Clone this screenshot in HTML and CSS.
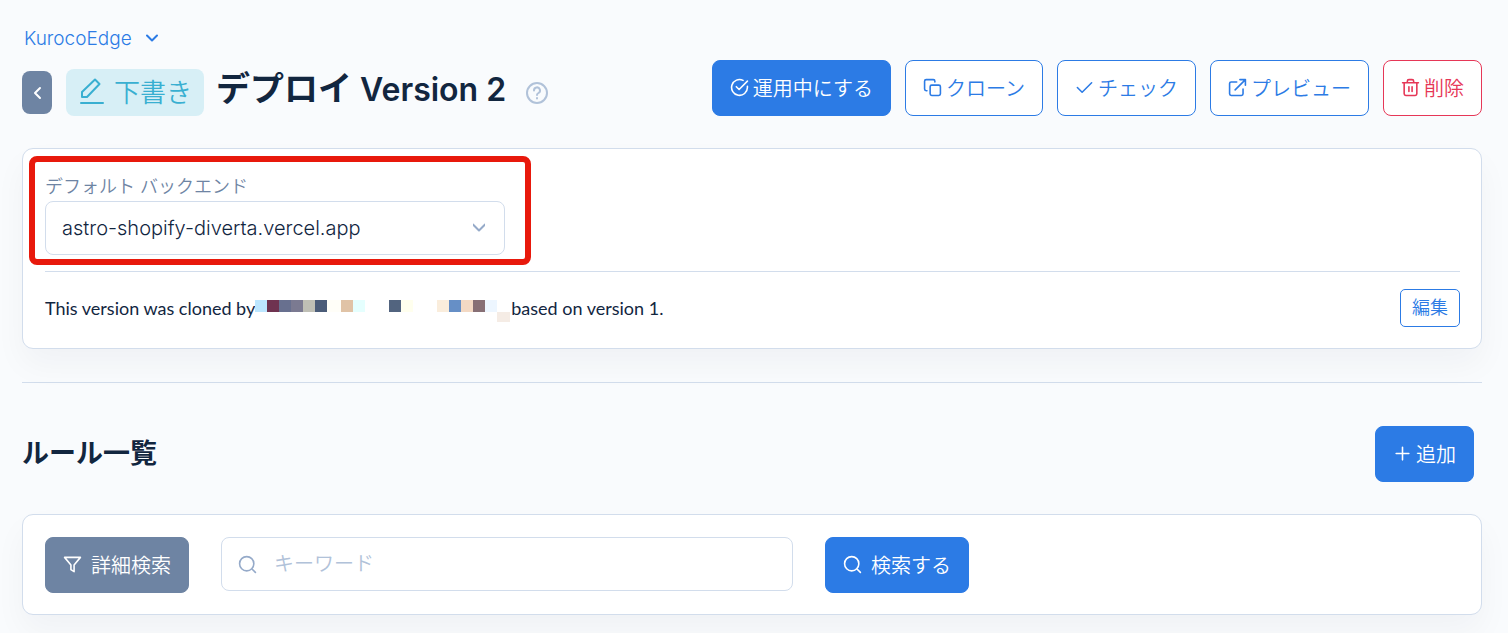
FILE: index.html
```
<!DOCTYPE html>
<html lang="ja">
<head>
  <meta charset="UTF-8">
  <meta name="viewport" content="width=device-width, initial-scale=1">
  <title>KurocoEdge</title>
  <link rel="stylesheet" href="styles.css">
</head>
<body>
  <main class="container">
    <header class="page-header">
      <div>
        <a class="breadcrumb" href="#">
          KurocoEdge
          <svg class="chevron" viewBox="0 0 12 12"><path d="M1 3.500l5 5 5-5"/></svg>
        </a>
        <div class="title-row">
          <button type="button" class="btn-back" aria-label="戻る">
            <svg viewBox="0 0 12 14"><path d="M9 2L4 7l5 5"/></svg>
          </button>
          <span class="status-badge">
            <svg viewBox="0 0 24 26"><path d="M1 25h22M2 19v-5L15 1.500l4.500 4.500L7 19z"/></svg>
            下書き
          </span>
          <h1>デプロイ <span class="version">Version 2</span></h1>
          <a class="help" href="#" aria-label="ヘルプ">
            <svg viewBox="0 0 24 24"><circle cx="12" cy="12" r="10"/><path d="M9 9.500a3 3 0 1 1 4.500 2.500c-1 .6-1.500 1-1.500 2M12 17v.5"/></svg>
          </a>
        </div>
      </div>
      <div class="button-group">
        <button type="button" class="btn btn-primary">
          <svg class="icon" viewBox="0 0 24 24"><path d="M22 10.500V12a10 10 0 1 1-5.500-9M22 4L11.500 14.500l-3.500-3.500"/></svg>
          運用中にする
        </button>
        <button type="button" class="btn btn-outline">
          <svg class="icon" viewBox="0 0 24 24"><rect x="9" y="9" width="13" height="13" rx="2"/><path d="M5 16H4a2 2 0 0 1-2-2V4a2 2 0 0 1 2-2h9a2 2 0 0 1 2 2v1"/></svg>
          クローン
        </button>
        <button type="button" class="btn btn-outline">
          <svg class="icon" viewBox="0 0 24 24"><path d="M3 12l6 6L21 6"/></svg>
          チェック
        </button>
        <button type="button" class="btn btn-outline">
          <svg class="icon" viewBox="0 0 24 24"><path d="M19 14v6a2 2 0 0 1-2 2H4a2 2 0 0 1-2-2V7a2 2 0 0 1 2-2h7M15 2h7v7M22 2L9 15"/></svg>
          プレビュー
        </button>
        <button type="button" class="btn btn-danger">
          <svg class="icon" viewBox="0 0 24 24"><path d="M2 6h20M8 6V4a2 2 0 0 1 2-2h4a2 2 0 0 1 2 2v2M4 6v14a2 2 0 0 0 2 2h12a2 2 0 0 0 2-2V6M10 11v6M14 11v6"/></svg>
          削除
        </button>
      </div>
    </header>

    <section class="card backend-card">
      <div class="highlight"></div>
      <div class="field">
        <label for="backend">デフォルト バックエンド</label>
        <div class="select-wrap">
          <select id="backend">
            <option>astro-shopify-diverta.vercel.app</option>
          </select>
          <svg class="chevron" viewBox="0 0 12 12"><path d="M0 3.500l6 6 6-6"/></svg>
        </div>
      </div>
      <div class="note">
        <p>
          <span>This version was cloned by</span>
          <svg class="mosaic" viewBox="0 0 256 22" shape-rendering="crispEdges">
            <rect x="0" width="12" height="12" fill="#bce6ff"/>
            <rect x="12" width="12" height="12" fill="#6f3350"/>
            <rect x="24" width="12" height="12" fill="#68708f"/>
            <rect x="36" width="12" height="12" fill="#7b7a91"/>
            <rect x="48" width="12" height="12" fill="#bfbfb5"/>
            <rect x="60" width="12" height="12" fill="#4b5c78"/>
            <rect x="72" width="14" height="12" fill="#fffef8"/>
            <rect x="86" width="12" height="12" fill="#e0c3a6"/>
            <rect x="98" width="12" height="12" fill="#e5fffe"/>
            <rect x="134" width="12" height="12" fill="#52647f"/>
            <rect x="146" width="12" height="12" fill="#ffffee"/>
            <rect x="182" width="12" height="12" fill="#faeddc"/>
            <rect x="194" width="12" height="12" fill="#668fc6"/>
            <rect x="206" width="12" height="12" fill="#f3d9c4"/>
            <rect x="218" width="12" height="12" fill="#876f75"/>
            <rect x="230" width="12" height="12" fill="#edf6ff"/>
            <rect x="242" y="12" width="13" height="10" fill="#f5ece5"/>
          </svg>
          <span>based on version 1.</span>
        </p>
        <button type="button" class="btn btn-outline btn-sm">編集</button>
      </div>
    </section>

    <section class="section-header">
      <h2>ルール一覧</h2>
      <button type="button" class="btn btn-primary">
        <svg class="icon" viewBox="0 0 24 24"><path d="M12 4v16M4 12h16"/></svg>
        追加
      </button>
    </section>

    <form class="card search-bar">
      <button type="button" class="btn btn-secondary">
        <svg class="icon" viewBox="0 0 24 24"><path d="M2 3h20l-8 9.500V21l-4-2.500v-6z"/></svg>
        詳細検索
      </button>
      <div class="keyword">
        <svg class="icon" viewBox="0 0 24 24"><circle cx="11" cy="11" r="9"/><path d="M18 18l4 4"/></svg>
        <input type="text" placeholder="キーワード" aria-label="キーワード">
      </div>
      <button type="button" class="btn btn-primary">
        <svg class="icon" viewBox="0 0 24 24"><circle cx="11" cy="11" r="9"/><path d="M18 18l4 4"/></svg>
        検索する
      </button>
    </form>
  </main>
</body>
</html>
```
FILE: styles.css
```
:root {
  --primary: #2c7be5;
  --secondary: #6e84a3;
  --danger: #e63757;
  --info: #39afd1;
  --dark: #12263f;
  --muted: #95aac9;
  --border: #d2ddec;
  --background: #f9fbfd;
}

* {
  box-sizing: border-box;
}

body {
  margin: 0;
  font-family: Inter, "Noto Sans CJK JP", sans-serif;
  font-size: 20px;
  font-weight: 350;
  background-color: var(--background);
  color: var(--dark);
}

button, input, select {
  font: inherit;
  color: inherit;
}

svg {
  fill: none;
  stroke: currentColor;
  stroke-width: 2;
  stroke-linecap: round;
  stroke-linejoin: round;
  flex-shrink: 0;
}

.container {
  padding: 24px 26px 18px 22px;
}

.page-header {
  display: flex;
  justify-content: space-between;
  align-items: flex-end;
  margin-bottom: 32px;
}

.breadcrumb {
  display: inline-flex;
  align-items: center;
  gap: 14px;
  height: 28px;
  padding-left: 2px;
  color: var(--primary);
  font-size: 19px;
  text-decoration: none;
}

.chevron {
  width: 12px;
  height: 12px;
}

.title-row {
  display: flex;
  align-items: center;
  margin-top: 17px;
}

.btn-back {
  display: flex;
  align-items: center;
  justify-content: center;
  width: 30px;
  height: 43px;
  margin-right: 14px;
  padding: 0;
  border: none;
  border-radius: 8px;
  background-color: var(--secondary);
  color: white;
  cursor: pointer;
}

.btn-back svg {
  width: 12px;
  height: 14px;
}

.status-badge {
  display: flex;
  align-items: center;
  gap: 10px;
  height: 47px;
  margin-right: 12px;
  padding: 0 12px 4px 14px;
  border-radius: 8px;
  background-color: #d7eff6;
  color: var(--info);
  font-size: 26px;
}

.status-badge svg {
  width: 24px;
  height: 26px;
}

h1 {
  margin: 0 19px 0 0;
  padding-bottom: 6px;
  font-size: 34px;
  font-weight: 700;
  line-height: 40px;
}

.version {
  font-size: 32px;
  font-weight: 600;
}

.help {
  display: flex;
  color: #b1c2d9;
}

.help svg {
  width: 24px;
  height: 24px;
}

.button-group {
  display: flex;
  gap: 14px;
}

.btn {
  display: flex;
  align-items: center;
  justify-content: center;
  gap: 4px;
  height: 56px;
  padding: 0 17px 2px;
  border: 1px solid;
  border-radius: 8px;
  white-space: nowrap;
  cursor: pointer;
}

.icon {
  width: 19px;
  height: 19px;
}

.btn-primary {
  border-color: var(--primary);
  background-color: var(--primary);
  color: white;
}

.btn-secondary {
  border-color: var(--secondary);
  background-color: var(--secondary);
  color: white;
}

.btn-outline {
  border-color: var(--primary);
  background-color: white;
  color: var(--primary);
}

.btn-danger {
  border-color: var(--danger);
  background-color: white;
  color: var(--danger);
}

.btn-sm {
  height: 38px;
  padding: 0 11px 4px;
  border-radius: 5px;
  font-size: 18px;
}

.card {
  border: 1px solid var(--border);
  border-radius: 11px;
  background-color: white;
  box-shadow: 0 16px 32px rgba(18, 38, 63, 0.04);
}

.backend-card {
  position: relative;
  padding: 24px 21px 21px 22px;
}

.highlight {
  position: absolute;
  top: 7px;
  left: 6px;
  width: 502px;
  height: 109px;
  border: 6px solid #e8190c;
  border-radius: 8px;
  pointer-events: none;
}

.field {
  width: 460px;
}

.field label {
  display: block;
  color: var(--secondary);
  font-size: 18px;
  line-height: 28px;
}

.select-wrap {
  position: relative;
}

.select-wrap select {
  width: 100%;
  height: 54px;
  padding: 0 40px 0 16px;
  border: 1px solid var(--border);
  border-radius: 8px;
  background-color: white;
  appearance: none;
}

.select-wrap .chevron {
  position: absolute;
  top: 20px;
  right: 20px;
  color: var(--muted);
  pointer-events: none;
}

.note {
  display: flex;
  justify-content: space-between;
  align-items: center;
  margin-top: 16px;
  padding-top: 17px;
  border-top: 1px solid var(--border);
}

.note p {
  display: flex;
  align-items: center;
  margin: 0;
  font-family: Lato, sans-serif;
  font-size: 18px;
  font-weight: 400;
}

.mosaic {
  width: 256px;
  height: 22px;
  margin-top: 6px;
  stroke: none;
}

.section-header {
  display: flex;
  justify-content: space-between;
  align-items: center;
  margin: 33px 0 32px;
  padding: 43px 8px 0 0;
  border-top: 1px solid var(--border);
}

h2 {
  margin: 0;
  padding-bottom: 6px;
  font-size: 27px;
  font-weight: 700;
}

.search-bar {
  display: flex;
  align-items: flex-start;
  padding: 22px 22px 21px;
}

.search-bar .btn {
  gap: 9px;
}

.keyword {
  display: flex;
  align-items: center;
  flex: 0 1 572px;
  gap: 17px;
  height: 54px;
  margin: 0 32px;
  padding: 0 16px;
  border: 1px solid var(--border);
  border-radius: 8px;
  background-color: white;
  color: var(--muted);
}

.keyword input {
  flex: 1;
  min-width: 0;
  padding: 0;
  border: none;
  outline: none;
  background: none;
  color: var(--dark);
}

.keyword input::placeholder {
  color: #b1c2d9;
}
```
